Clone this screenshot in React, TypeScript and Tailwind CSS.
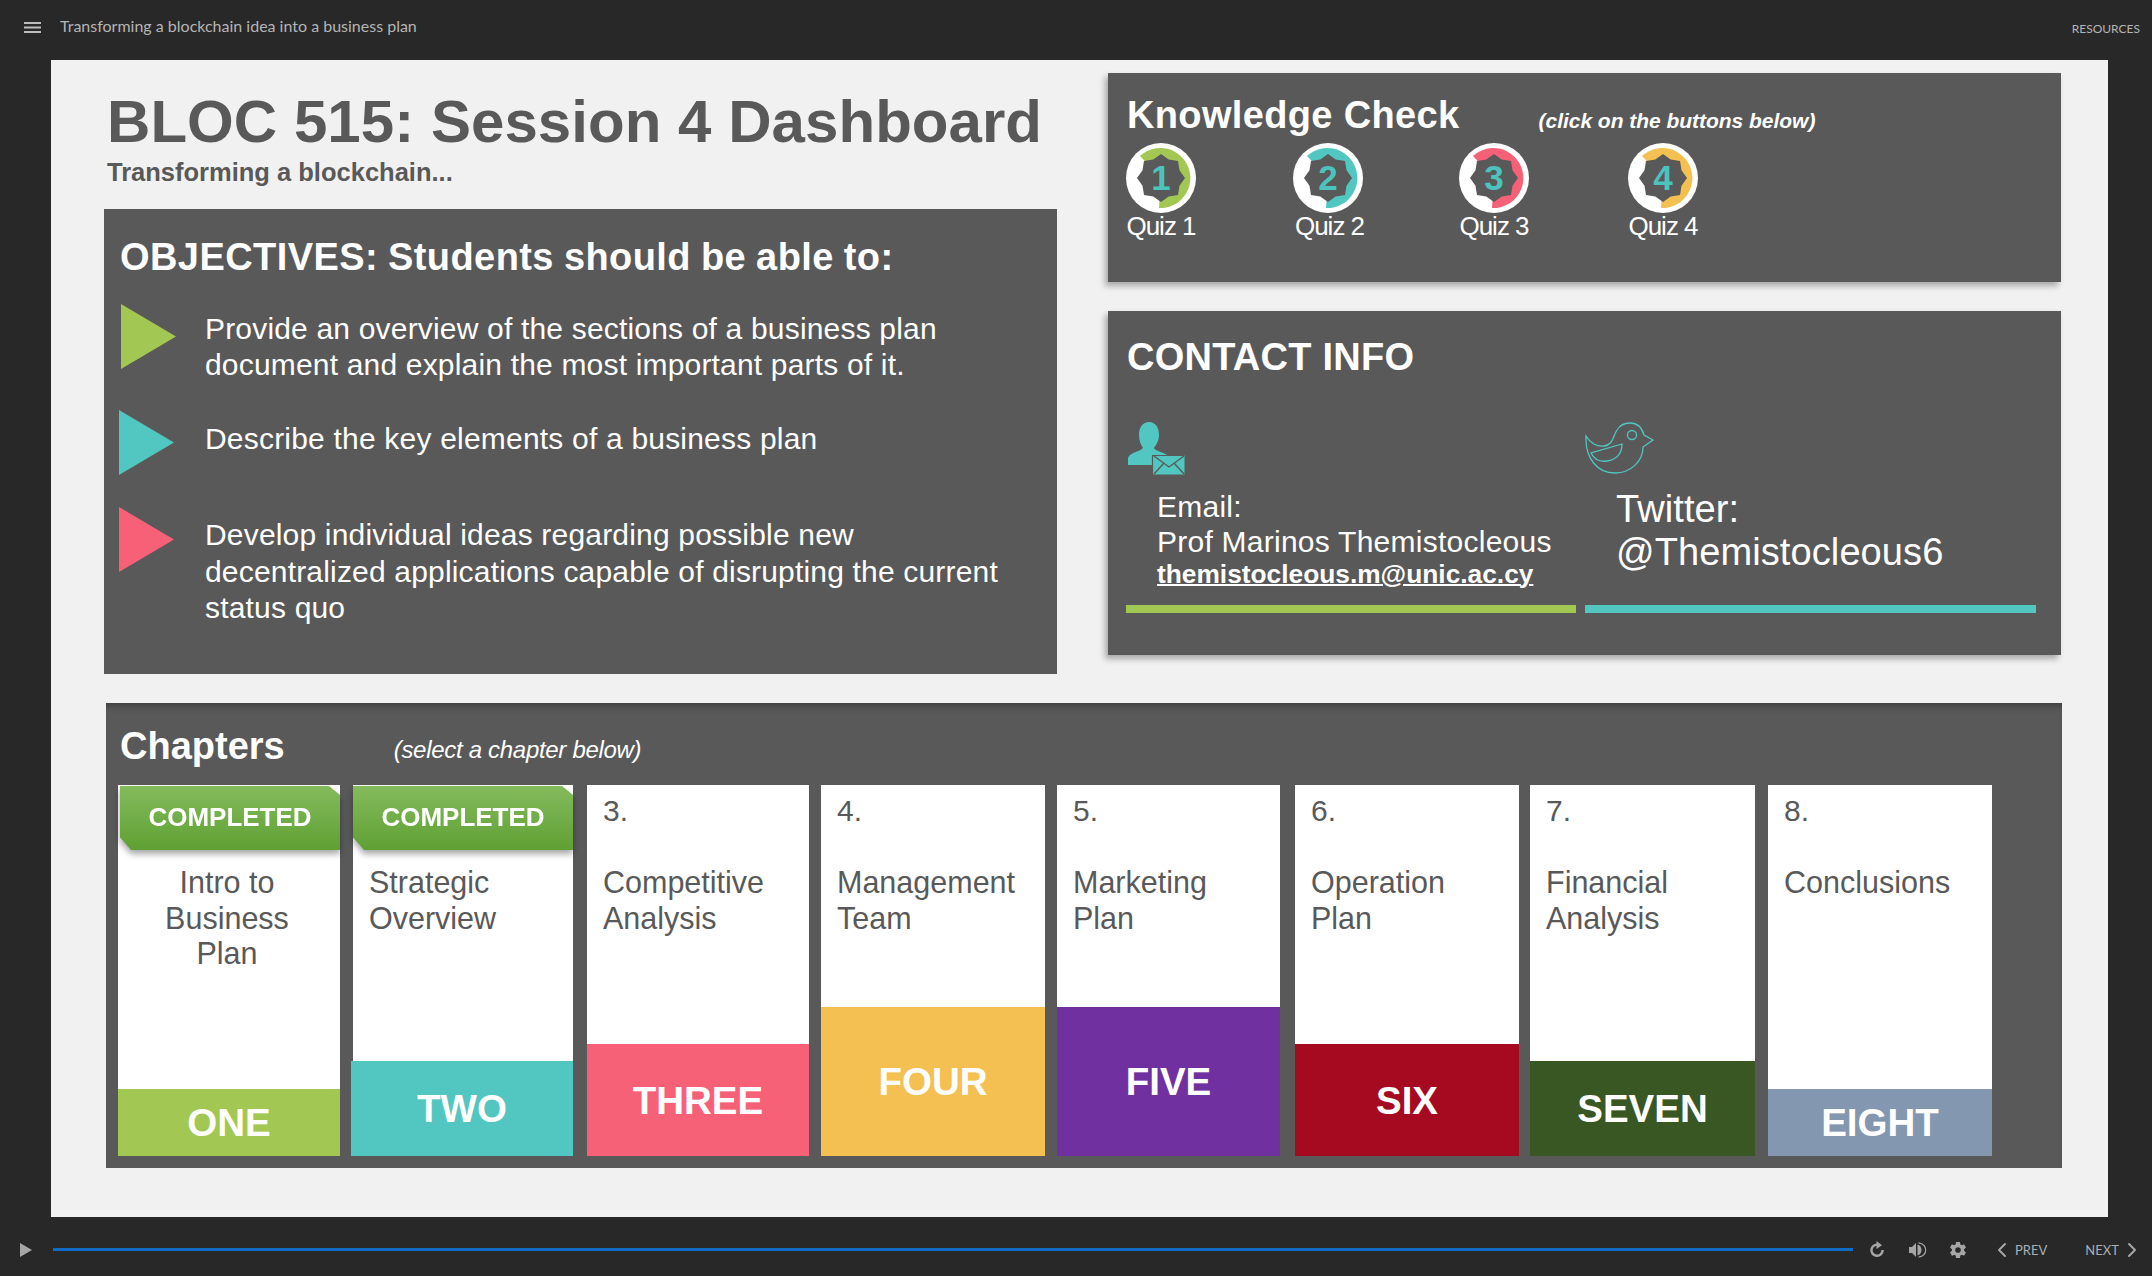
import { ChevronLeft, ChevronRight } from "lucide-react";
import { IoSettingsSharp } from "react-icons/io5";

const chapters = [
  { num: "", title: ["Intro to", "Business", "Plan"], label: "ONE", done: true, center: true, cls: "w-[222px]", whiteCls: "", barCls: "h-[67px] bg-[#a2c853]", bannerCls: "left-[2px] w-[220px]" },
  { num: "", title: ["Strategic", "Overview"], label: "TWO", done: true, center: false, cls: "w-[222px] ml-[11px]", whiteCls: "ml-[2px]", barCls: "h-[95px] bg-[#52c6c0]", bannerCls: "left-[2px] w-[220px]" },
  { num: "3.", title: ["Competitive", "Analysis"], label: "THREE", done: false, center: false, cls: "w-[222px] ml-[14px]", whiteCls: "", barCls: "h-[112px] bg-[#f76178]", bannerCls: "" },
  { num: "4.", title: ["Management", "Team"], label: "FOUR", done: false, center: false, cls: "w-[224px] ml-[12px]", whiteCls: "", barCls: "h-[149px] bg-[#f5c052]", bannerCls: "" },
  { num: "5.", title: ["Marketing", "Plan"], label: "FIVE", done: false, center: false, cls: "w-[223px] ml-[12px]", whiteCls: "", barCls: "h-[149px] bg-[#7030a0]", bannerCls: "" },
  { num: "6.", title: ["Operation", "Plan"], label: "SIX", done: false, center: false, cls: "w-[224px] ml-[15px]", whiteCls: "", barCls: "h-[112px] bg-[#a50a21]", bannerCls: "" },
  { num: "7.", title: ["Financial", "Analysis"], label: "SEVEN", done: false, center: false, cls: "w-[225px] ml-[11px]", whiteCls: "", barCls: "h-[95px] bg-[#385723]", bannerCls: "" },
  { num: "8.", title: ["Conclusions"], label: "EIGHT", done: false, center: false, cls: "w-[224px] ml-[13px]", whiteCls: "", barCls: "h-[67px] bg-[#8497b0]", bannerCls: "" },
];

const quizzes = [
  { n: 1, color: "#a2c853", cls: "", labelCls: "" },
  { n: 2, color: "#52c6c0", cls: "ml-[97px]", labelCls: "ml-[3px]" },
  { n: 3, color: "#f76178", cls: "ml-[96px]", labelCls: "" },
  { n: 4, color: "#f5c052", cls: "ml-[99px]", labelCls: "" },
];

const starPoints = (() => {
  const pts: string[] = [];
  for (let i = 0; i < 16; i++) {
    const a = (i * Math.PI) / 8 - Math.PI / 2;
    const r = i % 2 === 0 ? 24 : 20;
    pts.push(`${(35 + r * Math.cos(a)).toFixed(1)},${(35 + r * Math.sin(a)).toFixed(1)}`);
  }
  return pts.join(" ");
})();

function QuizBadge({ n, color }: { n: number; color: string }) {
  return (
    <svg width="70" height="70" viewBox="0 0 70 70" className="block">
      <circle cx="35" cy="35" r="35" fill="#fff" />
      <path d="M14 13 A30 30 0 1 1 33 65 L35 35 Z" fill={color} />
      <polygon points={starPoints} fill="#595959" />
      <text x="35" y="46.500" textAnchor="middle" fontSize="35" fontWeight="700" fill="#4cc3bd" fontFamily="Liberation Sans">
        {n}
      </text>
    </svg>
  );
}

function Triangle({ color, cls }: { color: string; cls: string }) {
  return (
    <svg width="55" height="65" viewBox="0 0 55 65" className={`shrink-0 ${cls}`}>
      <polygon points="0,0 55,32.500 0,65" fill={color} />
    </svg>
  );
}

function PersonMail() {
  return (
    <svg width="58" height="53" viewBox="0 0 58 53" className="ml-[1px]">
      <path d="M22 0c6 0 10 5 10 13 0 6-3 10-5 13 1 3 9 4 13 7v10H1v-7c2-6 12-6 15-10-2-3-4-7-4-13C12 5 16 0 22 0z" fill="#52c6c0" />
      <rect x="26" y="33" width="31.500" height="19.500" fill="#52c6c0" />
      <path d="M25.500 33.500H57.500" stroke="#595959" strokeWidth="1.200" fill="none" />
      <path d="M25.500 33V52.500" stroke="#595959" strokeWidth="1.200" fill="none" />
      <path d="M27 34l15 11 15-11M27 52l10-11M57 52L47 41" fill="none" stroke="#595959" strokeWidth="1.400" />
    </svg>
  );
}

function Bird() {
  return (
    <svg width="70" height="52" viewBox="0 0 70 52" fill="none" stroke="#52c6c0" strokeWidth="1.300">
      <path d="M1 14C5 21 12 25 19 24C28 23 28 14 32 8C35 3 40 1 45 1C52 1 57 6 59 13L68 18L58 25C58 40 45 51 30 51C12 51 0 36 1 14Z" />
      <ellipse cx="47" cy="13" rx="4.500" ry="4.500" />
      <path d="M37 22L6 31C9 37 15 40 22 39C31 38 37 32 37 22Z" />
    </svg>
  );
}

function Replay() {
  return (
    <svg width="16" height="17" viewBox="0 0 16 17" className="text-[#a6a6a6]">
      <path d="M10.500 4.200A5.600 5.600 0 1 0 13.600 9" fill="none" stroke="currentColor" strokeWidth="2.400" />
      <polygon points="7.500,0 13,4.200 7.500,8" fill="currentColor" />
    </svg>
  );
}

function Volume() {
  return (
    <svg width="18" height="16" viewBox="0 0 18 16" fill="none">
      <path d="M0 5h3l4-4v14l-4-4H0z" fill="#a6a6a6" />
      <path d="M8.500 2.500c2.500.8 4 3 4 5.500s-1.500 4.700-4 5.500z" fill="#a6a6a6" />
      <path d="M9.500.8c4.500.8 7.200 3.700 7.200 7.200s-2.700 6.400-7.200 7.200" stroke="#a6a6a6" strokeWidth="1.200" />
    </svg>
  );
}

export default function App() {
  return (
    <div className="w-[2152px] h-[1276px] flex flex-col bg-[#282828] font-['Liberation_Sans',sans-serif] overflow-hidden">
      <div className="h-[60px] flex items-start font-['Lato',sans-serif] text-[#b5b5b5]">
        <svg width="17" height="11" viewBox="0 0 17 11" className="ml-[24px] mt-[22px]">
          <path d="M0 0h17v2H0zM0 4.500h17v2H0zM0 9h17v2H0z" fill="#bdbdbd" />
        </svg>
        <div className="ml-[19px] mt-[16px] text-[16px] leading-[20px]">Transforming a blockchain idea into a business plan</div>
        <div className="ml-auto mr-[12px] mt-[21px] text-[12px] leading-[16px]">RESOURCES</div>
      </div>

      <div className="ml-[51px] w-[2057px] h-[1157px] bg-[#f1f1f1] text-[#595959]">
        <div className="flex">
          <div className="ml-[53px] w-[953px]">
            <h1 className="ml-[3px] mt-[31px] text-[60px] leading-[62px] font-bold tracking-[0.05px]">BLOC 515: Session 4 Dashboard</h1>
            <div className="ml-[3px] mt-[3px] text-[25.5px] leading-[32px] font-bold">Transforming a blockchain...</div>
            <div className="mt-[21px] h-[465px] bg-[#595959] text-white pl-[16px]">
              <div className="pt-[26px] text-[38px] leading-[44px] font-bold tracking-[0.42px] [word-spacing:-1px]">OBJECTIVES: Students should be able to:</div>
              <div className="mt-[25px] flex">
                <Triangle color="#a2c853" cls="ml-[1px]" />
                <div className="ml-[29px] mt-[7px] text-[30px] leading-[35.5px] tracking-[0.18px]">
                  Provide an overview of the sections of a business plan
                  <br />
                  document and explain the most important parts of it.
                </div>
              </div>
              <div className="mt-[28px] flex">
                <Triangle color="#52c6c0" cls="-ml-[1px]" />
                <div className="ml-[31px] mt-[11px] text-[30px] leading-[36px] tracking-[0.2px]">Describe the key elements of a business plan</div>
              </div>
              <div className="mt-[32px] flex">
                <Triangle color="#f76178" cls="-ml-[1px]" />
                <div className="ml-[31px] mt-[10px] text-[30px] leading-[36.5px] tracking-[0.18px]">
                  Develop individual ideas regarding possible new
                  <br />
                  decentralized applications capable of disrupting the current
                  <br />
                  status quo
                </div>
              </div>
            </div>
          </div>

          <div className="ml-[51px] w-[953px] pt-[13px]">
            <div className="h-[209px] bg-[#595959] text-white pl-[18px] shadow-[-3px_4px_6px_rgba(0,0,0,0.3)]">
              <div className="flex items-end pt-[20px]">
                <div className="ml-[1px] text-[38px] leading-[44px] font-bold tracking-[0.35px]">Knowledge Check</div>
                <div className="ml-[79px] mb-[3px] text-[21px] leading-[26px] font-bold italic tracking-[-0.03px]">(click on the buttons below)</div>
              </div>
              <div className="mt-[6px] flex">
                {quizzes.map((q) => (
                  <div key={q.n} className={`flex flex-col items-center w-[70px] ${q.cls}`}>
                    <QuizBadge n={q.n} color={q.color} />
                    <div className={`-mt-[2px] text-[26px] leading-[30px] tracking-[-1px] whitespace-nowrap ${q.labelCls}`}>Quiz {q.n}</div>
                  </div>
                ))}
              </div>
            </div>

            <div className="mt-[29px] h-[344px] bg-[#595959] text-white pl-[18px] shadow-[-3px_4px_6px_rgba(0,0,0,0.3)]">
              <div className="ml-[1px] pt-[23px] text-[38px] leading-[46px] font-bold tracking-[0.25px]">CONTACT INFO</div>
              <div className="mt-[42px] flex">
                <div className="w-[459px]">
                  <PersonMail />
                  <div className="ml-[31px] mt-[14px] text-[30px] leading-[35px] tracking-[0.25px]">
                    <div>Email:</div>
                    <div>Prof Marinos Themistocleous</div>
                    <a className="block text-[26.3px] leading-[30px] tracking-normal font-bold underline decoration-2">themistocleous.m@unic.ac.cy</a>
                  </div>
                </div>
                <div>
                  <Bird />
                  <div className="ml-[31px] mt-[14px] text-[38px] leading-[43px] tracking-[0.1px]">
                    Twitter:
                    <br />
                    @Themistocleous6
                  </div>
                </div>
              </div>
              <div className="mt-[16px] flex">
                <div className="w-[450px] h-[8px] bg-[#a2c853]" />
                <div className="ml-[9px] w-[451px] h-[8px] bg-[#52c6c0]" />
              </div>
            </div>
          </div>
        </div>

        <div className="mt-[29px] ml-[55px] w-[1956px] h-[465px] bg-[#595959] shadow-[inset_0_8px_8px_-6px_rgba(0,0,0,0.35)] pl-[12px] pt-[18px] text-white">
          <div className="flex items-end h-[64px]">
            <div className="ml-[2px] text-[38px] leading-[44px] font-bold mb-[17px]">Chapters</div>
            <div className="ml-[109px] mb-[20px] text-[24px] leading-[30px] italic tracking-[-0.3px]">(select a chapter below)</div>
          </div>
          <div className="flex h-[371px]">
            {chapters.map((c) => (
              <div key={c.label} className={`relative flex flex-col ${c.cls}`}>
                <div className={`flex-1 bg-white text-[#595959] ${c.whiteCls}`}>
                  <div className="h-[44px] px-[16px] pt-[8px] text-[30px] leading-[36px]">{c.num}</div>
                  <div className={`mt-[36px] text-[30.5px] leading-[35.5px] ${c.center ? "pl-[14px] pr-[18px] text-center" : "px-[16px]"}`}>
                    {c.title.map((t) => (
                      <div key={t}>{t}</div>
                    ))}
                  </div>
                </div>
                <div className={`${c.barCls} flex items-center justify-center pt-[1px] text-[38.5px] font-bold text-white`}>{c.label}</div>
                {c.done && (
                  <div className={`absolute top-[1px] ${c.bannerCls} [filter:drop-shadow(0_4px_3px_rgba(0,0,0,0.35))]`}>
                    <div className="h-[64px] pb-[2px] flex items-center justify-center text-[26px] font-bold text-white bg-gradient-to-b from-[#84bb5c] to-[#5fa032] [clip-path:polygon(0_0,95%_0,100%_14%,100%_100%,5%_100%,0_80%)]">
                      COMPLETED
                    </div>
                  </div>
                )}
              </div>
            ))}
          </div>
        </div>
      </div>

      <div className="flex-1 flex items-center pt-[6px] font-['Lato',sans-serif] text-[13px] text-[#a6b0b8]">
        <svg width="12" height="14" viewBox="0 0 12 14" className="ml-[20px]">
          <polygon points="0,0 12,7 0,14" fill="#a6a6a6" />
        </svg>
        <div className="ml-[21px] w-[1800px] h-[3px] bg-[#0f6bc4]" />
        <div className="ml-[16px]">
          <Replay />
        </div>
        <div className="ml-[24px]">
          <Volume />
        </div>
        <IoSettingsSharp className="ml-[22px] w-[18px] h-[18px] text-[#a6a6a6]" />
        <ChevronLeft className="ml-[23px] w-[24px] h-[24px] text-[#a6a6a6]" strokeWidth={2} />
        <div className="ml-[1px] leading-[16px]">PREV</div>
        <div className="ml-[38px] leading-[16px]">NEXT</div>
        <ChevronRight className="ml-[1px] w-[24px] h-[24px] text-[#a6a6a6]" strokeWidth={2} />
      </div>
    </div>
  );
}
